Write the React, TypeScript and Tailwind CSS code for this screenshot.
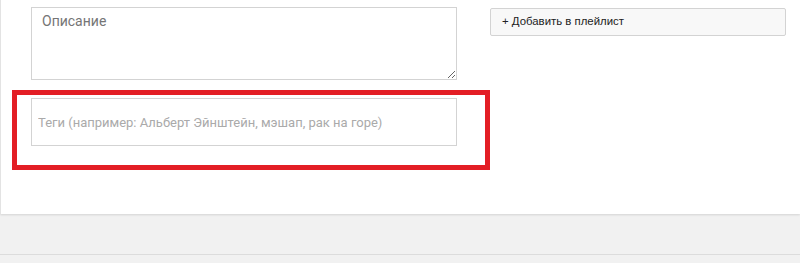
export default function App() {
  return (
    <div className="flex h-[263px] w-[800px] flex-col bg-[#f1f1f1] font-['Roboto','Liberation_Sans',sans-serif]">
      <div className="flex h-[214px] shrink-0 border-l border-[#e3e3e3] bg-white pl-[11px] shadow-[0_1px_2px_rgba(0,0,0,0.12)]">
        {/* left column: description + tags */}
        <div className="flex w-[478px] flex-col pt-[7px]">
          <textarea
            placeholder="Описание"
            className="ml-[19px] h-[73px] w-[426px] border border-[#d3d3d3] bg-white px-[10px] pt-[3px] text-[14px] text-[#333] outline-none placeholder:text-[#757575]"
          />
          <div className="mt-[10px] h-[80px] w-[478px] border-[5px] border-[#e31e25] pl-[14px] pt-[3px]">
            <input
              placeholder="Теги (например: Альберт Эйнштейн, мэшап, рак на горе)"
              className="h-[48px] w-[426px] border border-[#d3d3d3] bg-white px-[6px] text-[13px] text-[#333] outline-none placeholder:text-[#aaa]"
            />
          </div>
        </div>
        {/* right column */}
        <div className="pt-[8px]">
          <button className="flex h-[28px] w-[296px] items-center rounded-[2px] border border-[#d3d3d3] bg-[#f8f8f8] pl-[11px] font-['Liberation_Sans',Arial,sans-serif] text-[11.4px] text-[#222]">
            + Добавить в плейлист
          </button>
        </div>
      </div>
      <div className="h-[40px] shrink-0" />
      <div className="flex-1 border-t border-[#dcdcdc] bg-[#f1f1f1]" />
    </div>
  );
}
